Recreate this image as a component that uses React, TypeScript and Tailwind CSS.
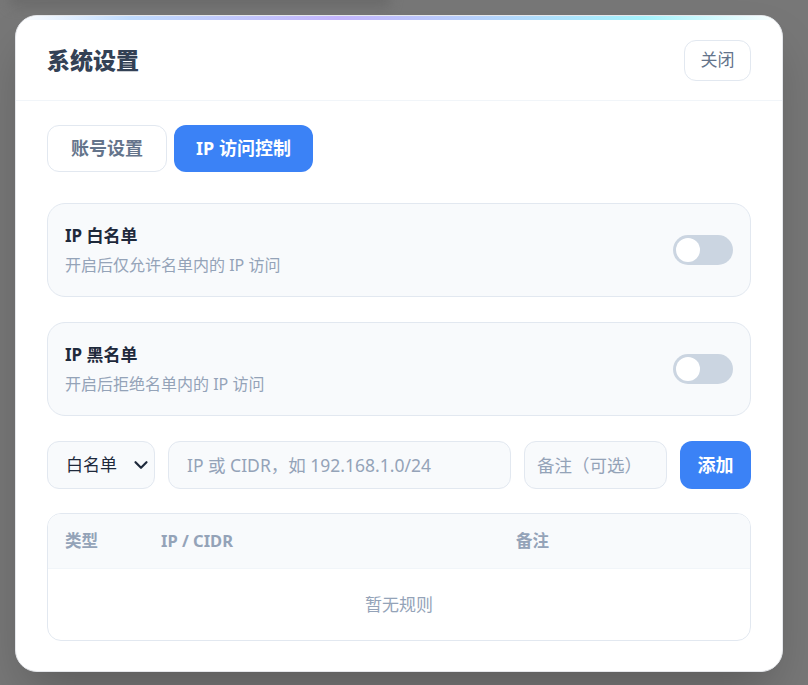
import { ChevronDown } from "lucide-react";

const font = { fontFamily: '"Noto Sans", "Noto Sans CJK SC", sans-serif' };

function Toggle() {
  return (
    <div className="flex h-[30px] w-[60px] items-center rounded-full bg-[#cbd5e1] px-[3px]">
      <div className="h-[24px] w-[24px] rounded-full bg-white" />
    </div>
  );
}

function SwitchCard({ title, desc }: { title: string; desc: string }) {
  return (
    <div className="flex h-[94px] items-center justify-between rounded-[18px] border border-[#e2e8f0] bg-[#f8fafc] pl-[17px] pr-[17px]">
      <div className="flex flex-col gap-[6px]">
        <div className="text-[17px] font-bold leading-[24px] text-[#1e293b]">{title}</div>
        <div className="text-[16px] leading-[22px] text-[#94a3b8]">{desc}</div>
      </div>
      <Toggle />
    </div>
  );
}

export default function App() {
  return (
    <div className="relative min-h-screen overflow-hidden bg-[#777777] p-[15px]" style={font}>
      <div className="absolute left-[10px] top-[-8px] h-[14px] w-[380px] rounded bg-[#6a6a6a] blur-[6px]" />
      <div className="relative flex h-[657px] w-[768px] flex-col overflow-hidden rounded-[22px] border border-[#e5e7eb] bg-white shadow-2xl">
        <div className="h-[4px] bg-[linear-gradient(90deg,#ffffff_0%,#bfdbfe_15%,#c4b5fd_42%,#a5f3fc_82%,#ffffff_100%)]" />
        <div className="flex h-[81px] items-center justify-between border-b border-[#f1f5f9] pl-[31px] pr-[31px]">
          <h2 className="text-[23px] font-extrabold text-[#334155]">系统设置</h2>
          <button className="h-[41px] w-[67px] rounded-[12px] border border-[#e2e8f0] bg-white text-[17px] text-[#64748b]">
            关闭
          </button>
        </div>
        <div className="flex flex-col px-[31px] pt-[24px]">
          <div className="flex gap-[7px]">
            <button className="h-[47px] w-[120px] rounded-[12px] border border-[#e2e8f0] bg-white text-[18px] font-bold text-[#64748b]">
              账号设置
            </button>
            <button className="h-[47px] w-[139px] rounded-[12px] bg-[#3b82f6] text-[18px] font-bold text-white">
              IP 访问控制
            </button>
          </div>
          <div className="mt-[31px] flex flex-col gap-[25px]">
            <SwitchCard title="IP 白名单" desc="开启后仅允许名单内的 IP 访问" />
            <SwitchCard title="IP 黑名单" desc="开启后拒绝名单内的 IP 访问" />
          </div>
          <div className="mt-[25px] flex h-[48px] gap-[13px]">
            <div className="flex w-[108px] items-center justify-between rounded-[12px] border border-[#e2e8f0] bg-[#f8fafc] pl-[18px] pr-[2px] text-[17px] text-[#1e293b]">
              白名单
              <ChevronDown size={22} strokeWidth={2.4} className="text-[#1e293b]" />
            </div>
            <input
              className="w-[343px] rounded-[12px] border border-[#e2e8f0] bg-[#f8fafc] px-[18px] text-[17.5px] text-[#1e293b] outline-none placeholder:text-[#94a3b8]"
              placeholder="IP 或 CIDR，如 192.168.1.0/24"
            />
            <input
              className="w-[143px] rounded-[12px] border border-[#e2e8f0] bg-[#f8fafc] px-[12px] text-[17.5px] text-[#1e293b] outline-none placeholder:text-[#94a3b8]"
              placeholder="备注（可选）"
            />
            <button className="w-[71px] rounded-[12px] bg-[#3b82f6] text-[18px] font-bold text-white">添加</button>
          </div>
          <div className="mt-[24px] overflow-hidden rounded-[14px] border border-[#e2e8f0]">
            <div className="flex h-[55px] items-center border-b border-[#f1f5f9] bg-[#f8fafc] text-[16.5px] font-bold text-[#94a3b8]">
              <div className="w-[96px] pl-[17px]">类型</div>
              <div className="w-[355px] pl-[17px]">IP / CIDR</div>
              <div className="flex-1 pl-[17px]">备注</div>
            </div>
            <div className="flex h-[71px] items-center justify-center text-[17px] text-[#94a3b8]">暂无规则</div>
          </div>
        </div>
      </div>
    </div>
  );
}
